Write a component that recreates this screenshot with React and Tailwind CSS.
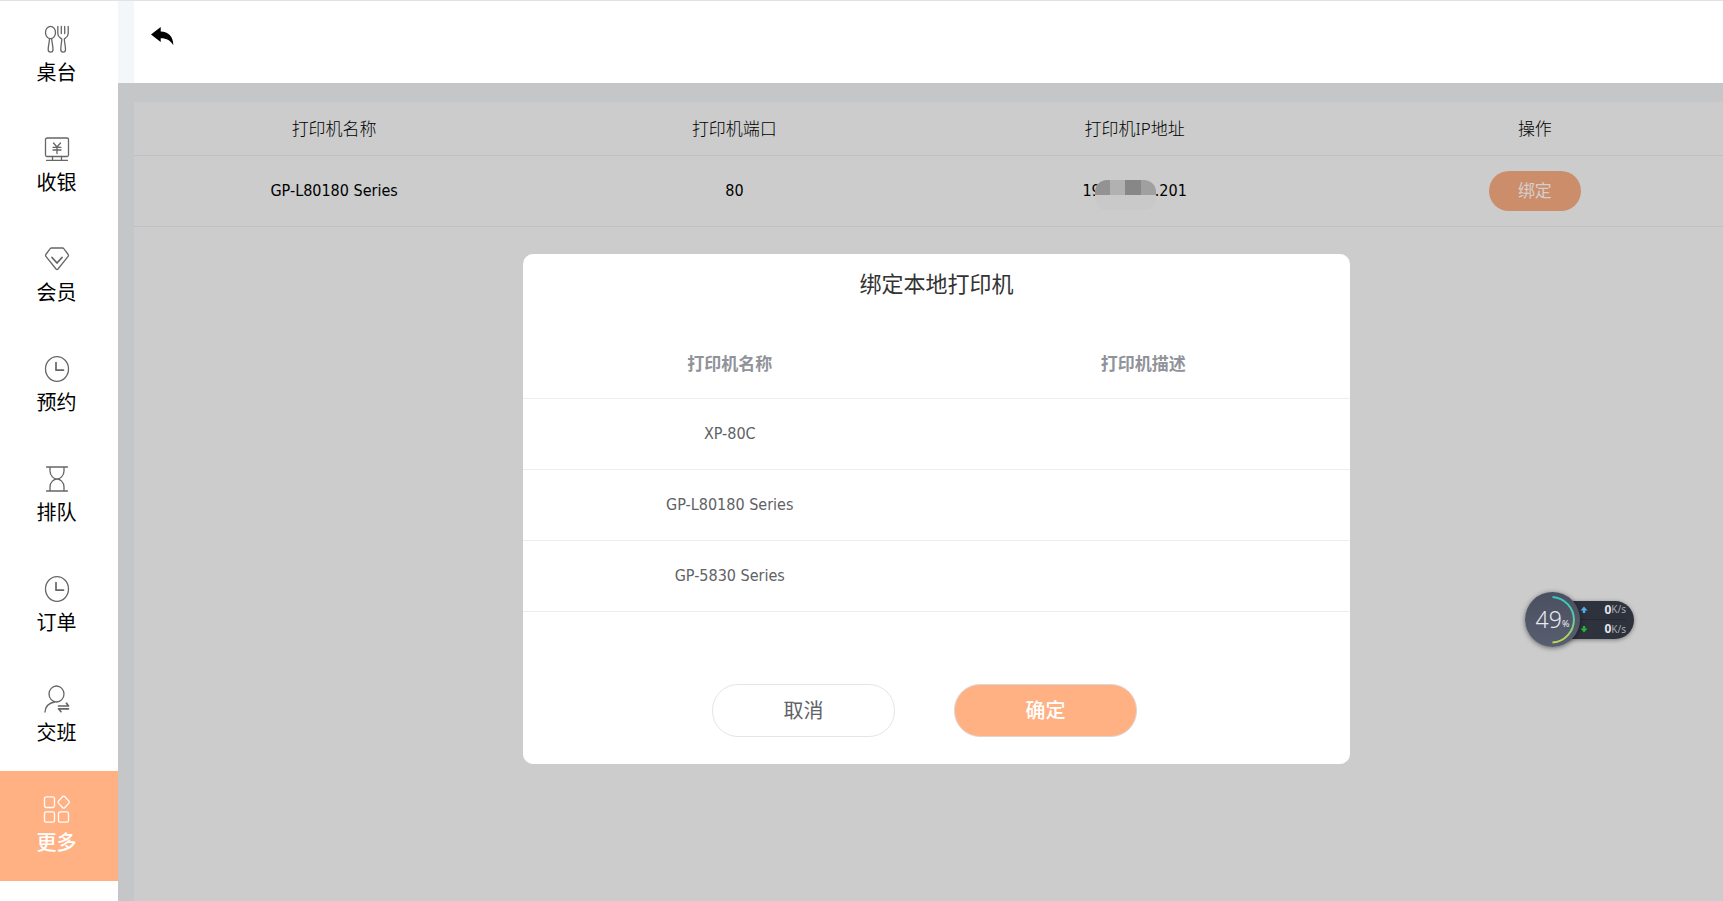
import React from 'react';

const strokeProps = { fill: 'none', stroke: 'currentColor', strokeWidth: 1.3, strokeLinecap: 'round', strokeLinejoin: 'round' };

function Icon({ children }) {
  return (
    <svg viewBox="0 0 28 28" className="h-7 w-7" aria-hidden="true" {...strokeProps}>
      {children}
    </svg>
  );
}

const Clock = () => (
  <Icon>
    <ellipse cx="14" cy="14" rx="11.500" ry="12.300" />
    <path d="M13 7.500v7.700h7.500" strokeWidth="1.700" />
  </Icon>
);

const items = [
  {
    label: '桌台',
    icon: (
      <Icon>
        <ellipse cx="7.500" cy="7.500" rx="5" ry="6.200" />
        <path d="M6.500 14C6.300 18 5.200 21 5.200 24.500C5.200 28 10 28 10 24.500C10 21 9 18 8.700 14" />
        <path d="M14.800 1.500V8.500C14.800 12 17 12.500 18.800 14C18.600 18 17.800 21 17.800 24.500C17.800 28 22.500 28 22.500 24.500C22.500 21 21.500 18 21.300 14C23 12.500 25.200 12 25.200 8.500V1.500M18.300 1.500V8.500M21.700 1.500V8.500" />
      </Icon>
    ),
  },
  {
    label: '收银',
    icon: (
      <Icon>
        <rect x="2.500" y="3" width="23" height="18.500" rx="1.500" />
        <path d="M10.500 8l3.500 4 3.500-4M10 12.300h8M10 15h8M14 12v6.500M9.500 21.500v3.500M18.500 21.500v3.500M3.500 25.300h21" />
      </Icon>
    ),
  },
  {
    label: '会员',
    icon: (
      <Icon>
        <path d="M8.500 3h11q.8 0 1.300.7L25.200 9.500q.6 1-.1 1.900L15 24q-1 1-2 0L2.900 11.400Q2.200 10.500 2.800 9.500L7.200 3.700q.5-.7 1.300-.7z" />
        <path d="M9 12.500l5 5.500 5-5.500" strokeWidth="1.800" />
      </Icon>
    ),
  },
  { label: '预约', icon: <Clock /> },
  {
    label: '排队',
    icon: (
      <Icon>
        <path d="M3.500 2h21M3.500 26h21M7 2v4c0 5 4 8 7 8s7-3 7-8V2M7 26v-4c0-5 4-8 7-8s7 3 7 8v4" />
      </Icon>
    ),
  },
  { label: '订单', icon: <Clock /> },
  {
    label: '交班',
    icon: (
      <Icon>
        <ellipse cx="13.500" cy="9" rx="7.500" ry="8" />
        <path d="M11.500 17C6 18 2.500 21.500 2 27" />
        <path d="M15.500 21h10L23.500 18.200M25.500 23.800h-10L18 26.700" strokeWidth="1.700" />
      </Icon>
    ),
  },
  {
    label: '更多',
    active: true,
    icon: (
      <Icon>
        <rect x="1.500" y="1.800" width="10" height="10.700" rx="1.800" />
        <rect x="1.500" y="16.800" width="10" height="10.400" rx="1.800" />
        <rect x="15.500" y="16.800" width="10" height="10.400" rx="1.800" />
        <path d="M19.700 1.500q1-.8 2 0l4.200 4.600q.8 1 0 2l-4.200 4.600q-1 .8-2 0L15.500 8.100q-.8-1 0-2z" />
      </Icon>
    ),
  },
];

function Sidebar() {
  return (
    <nav className="w-[118px] shrink-0 bg-white">
      {items.map((item) => (
        <a
          key={item.label}
          href="#"
          className={
            item.active
              ? 'flex h-[110px] flex-col items-center bg-[#ffb184] pt-6 pr-[5px] text-white'
              : 'flex h-[110px] flex-col items-center pt-6 pr-[5px] text-[#666]'
          }
        >
          {item.icon}
          <span
            className={
              item.active ? 'mt-1 text-xl leading-8 font-medium text-white' : 'mt-1 text-xl leading-8 text-black'
            }
          >
            {item.label}
          </span>
        </a>
      ))}
    </nav>
  );
}

function MaskedAddress() {
  return (
    <span className="inline-flex">
      <span>19</span>
      <span className="relative -ml-1.5 w-[60px]">
        <span className="absolute top-px left-0 grid h-[30px] w-[61px] grid-cols-4 grid-rows-2 overflow-hidden rounded-xl bg-[#c9c9c9]">
          <i className="bg-[#939393]" />
          <i className="bg-[#b1b1b1]" />
          <i className="bg-[#878787]" />
          <i className="bg-[#a0a0a0]" />
        </span>
      </span>
      <span>.201</span>
    </span>
  );
}

function PrinterTable() {
  return (
    <table className="w-[calc(100%+12px)] table-fixed border-collapse text-center text-black">
      <thead>
        <tr className="h-[53px] border-b border-[#bfc0c3] text-[17px]">
          <th className="font-light">打印机名称</th>
          <th className="font-light">打印机端口</th>
          <th className="font-light">打印机IP地址</th>
          <th className="font-light">操作</th>
        </tr>
      </thead>
      <tbody>
        <tr className="h-[71px] border-b border-[#bfc0c3] font-['DejaVu_Sans_Condensed','Noto_Sans','Noto_Sans_CJK_SC',sans-serif] text-base">
          <td>GP-L80180 Series</td>
          <td>80</td>
          <td>
            <MaskedAddress />
          </td>
          <td>
            <button type="button" className="h-10 w-[92px] rounded-[20px] bg-[#cc8e6a] pt-0.5 text-[17px] text-[#d4cfcc]">
              绑定
            </button>
          </td>
        </tr>
      </tbody>
    </table>
  );
}

function BindDialog() {
  return (
    <div
      role="dialog"
      aria-labelledby="bind-title"
      className="absolute top-[171px] left-[405px] w-[827px] rounded-[10px] bg-white pb-[27px]"
    >
      <h2 id="bind-title" className="pt-[11px] text-center text-[22px] leading-9 text-[#333]">
        绑定本地打印机
      </h2>
      <table className="mt-7 w-full table-fixed border-collapse text-center text-base text-[#606266]">
        <thead>
          <tr className="h-[69px] border-b border-[#ebeef5] text-[17px] text-[#909399]">
            <th className="font-bold">打印机名称</th>
            <th className="font-bold">打印机描述</th>
          </tr>
        </thead>
        <tbody className="font-['DejaVu_Sans_Condensed','Noto_Sans','Noto_Sans_CJK_SC',sans-serif]">
          {['XP-80C', 'GP-L80180 Series', 'GP-5830 Series'].map((name) => (
            <tr key={name} className="h-[71px] border-b border-[#ebeef5]">
              <td>{name}</td>
              <td />
            </tr>
          ))}
        </tbody>
      </table>
      <div className="mt-[72px] flex justify-center gap-[59px] pr-6 text-xl">
        <button
          type="button"
          className="h-[53px] w-[183px] rounded-[26px] border border-[#e5e5e5] bg-white pt-0.5 text-[#606266]"
        >
          取消
        </button>
        <button
          type="button"
          className="h-[53px] w-[183px] rounded-[26px] border border-[#e0d6d0] bg-[#ffb184] pt-0.5 font-medium text-white"
        >
          确定
        </button>
      </div>
    </div>
  );
}

function Speed({ up }) {
  return (
    <div className="flex h-[19px] items-center">
      <svg viewBox="0 0 8 8" className={up ? 'h-2 w-2 text-[#4db1ee]' : 'h-2 w-2 text-[#2bb43c]'} aria-hidden="true">
        <path fill="currentColor" d={up ? 'M4 .5L7.500 4.500H5.200V7H2.800V4.500H.5z' : 'M4 7.500L7.500 3.500H5.200V1H2.800V3.500H.5z'} />
      </svg>
      <span className="ml-auto text-xs font-bold text-[#e4e6ea]">0</span>
      <span className="text-[10px] text-[#a7abb3]">K/s</span>
    </div>
  );
}

function NetworkMonitor() {
  return (
    <div className="absolute right-[89px] bottom-[254px] flex items-center">
      <div className="relative z-10 flex size-[55px] items-center justify-center rounded-full bg-linear-to-b from-[#4b5060] to-[#575e70] shadow-[0_1px_5px_rgba(0,0,0,0.5)]">
        <svg viewBox="0 0 56 56" className="absolute top-0 left-0 h-full w-full" aria-hidden="true">
          <defs>
            <linearGradient id="load-arc" x1="0" y1="0" x2="0" y2="1">
              <stop offset="0" stopColor="#35c6c4" />
              <stop offset="0.5" stopColor="#62cf9e" />
              <stop offset="1" stopColor="#c9d84a" />
            </linearGradient>
          </defs>
          <path d="M28 5A23.300 23.300 0 0 1 28 51.500" fill="none" stroke="url(#load-arc)" strokeWidth="2" />
        </svg>
        <span className="text-[23px] font-light text-[#e8eaee]">49</span>
        <span className="pt-2 text-[9px] text-[#e8eaee]">%</span>
      </div>
      <div className="-ml-7 w-[82px] divide-y divide-[#252933] rounded-r-[19px] bg-[#2e323d] pr-2 pl-7 shadow-[0_1px_4px_rgba(0,0,0,0.4)]">
        <Speed up />
        <Speed />
      </div>
    </div>
  );
}

export default function App() {
  return (
    <div className="flex h-screen overflow-hidden border-t border-[#dfe3e8] bg-white font-['Noto_Sans','Noto_Sans_CJK_SC',sans-serif]">
      <Sidebar />
      <div className="flex min-w-0 flex-1 flex-col bg-[#f3f7f9]">
        <header className="ml-4 h-[82px] shrink-0 bg-white pt-[25px] pl-4">
          <button type="button" aria-label="返回" className="block text-black">
            <svg viewBox="0 0 24 20" className="h-5 w-6" fill="currentColor" aria-hidden="true">
              <path d="M1 8.500L10.700 1V5.500C18.500 5.500 23.500 11 23.300 19.300C20.500 14.500 17 12.300 10.700 12.300V16z" />
            </svg>
          </button>
        </header>
        <main className="relative flex-1 bg-[#c4c6c8] pt-[19px] pl-4">
          <div className="h-full overflow-hidden bg-[#ccc]">
            <PrinterTable />
          </div>
          <BindDialog />
          <NetworkMonitor />
        </main>
      </div>
    </div>
  );
}
